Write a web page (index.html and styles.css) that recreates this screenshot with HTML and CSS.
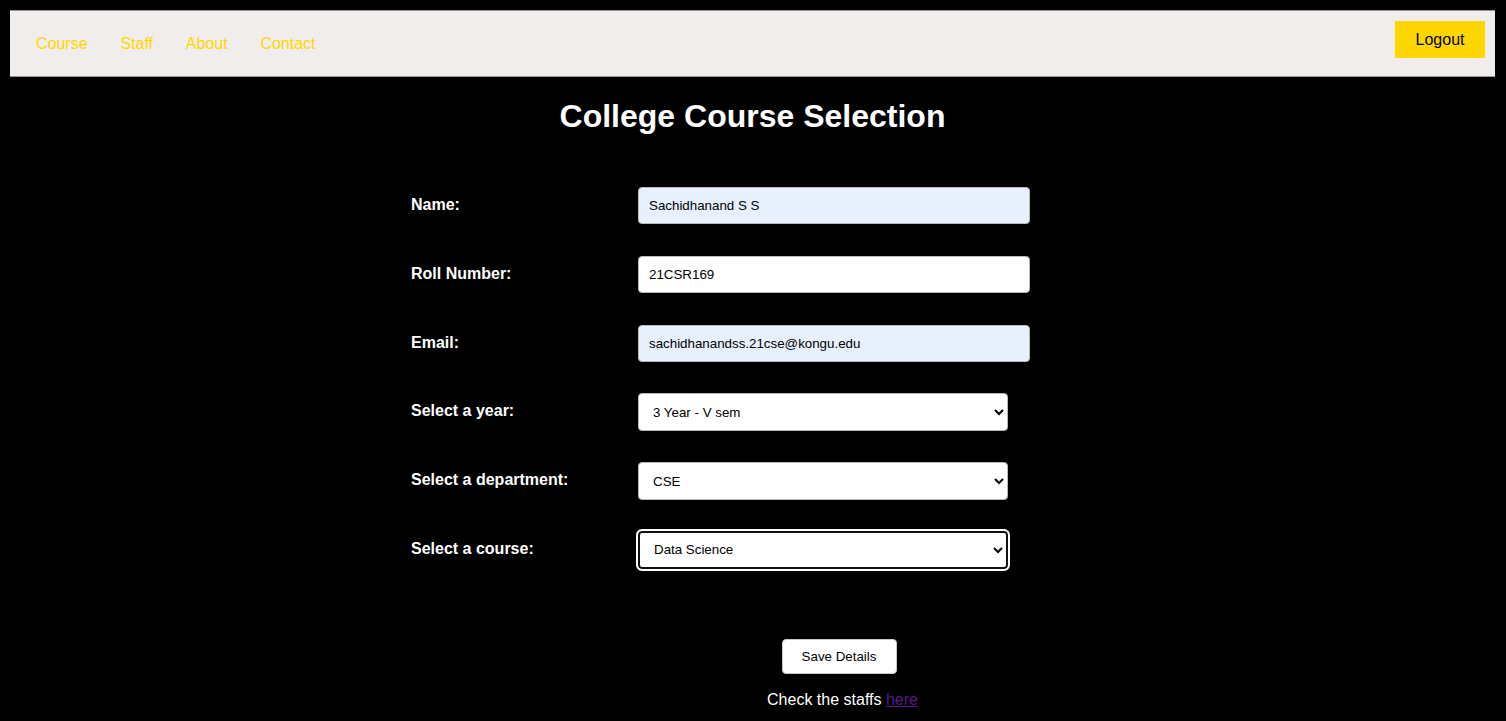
FILE: index.html
```html
<!DOCTYPE html>
<html>
<head>
<meta charset="utf-8">
<title>College Course Selection</title>
<link rel="stylesheet" href="styles.css">
</head>
<body>
<nav class="navbar">
  <ul class="nav-links">
    <li><a href="#">Course</a></li>
    <li><a href="#">Staff</a></li>
    <li><a href="#">About</a></li>
    <li><a href="#">Contact</a></li>
  </ul>
  <button class="logout">Logout</button>
</nav>
<h1 class="title">College Course Selection</h1>
<form class="course-form">
  <label class="label" for="name">Name:</label>
  <input class="field autofill" id="name" type="text" value="Sachidhanand S S">
  <label class="label" for="roll">Roll Number:</label>
  <input class="field" id="roll" type="text" value="21CSR169">
  <label class="label" for="email">Email:</label>
  <input class="field autofill" id="email" type="email" value="sachidhanandss.21cse@kongu.edu">
  <label class="label" for="year">Select a year:</label>
  <select class="select" id="year"><option>3 Year - V sem</option></select>
  <label class="label" for="dept">Select a department:</label>
  <select class="select" id="dept"><option>CSE</option></select>
  <label class="label" for="course">Select a course:</label>
  <select class="select focused" id="course"><option>Data Science</option></select>
</form>
<div class="actions">
  <button class="save">Save Details</button>
</div>
<p class="check">Check the staffs <a class="here" href="#">here</a></p>
</body>
</html>
```
FILE: styles.css
```css
html, body {
  background: #000;
}
body {
  margin: 10px 11px 0 10px;
  font-family: "Liberation Sans", Arial, sans-serif;
  color: #fff;
}
.navbar {
  display: flex;
  align-items: center;
  justify-content: space-between;
  height: 65px;
  background: #f1eded;
  border-top: 1px solid #9a9696;
  border-bottom: 1px solid #9a9696;
  padding: 0 10px 0 10px;
}
.nav-links {
  display: flex;
  list-style: none;
  margin: 0;
  padding: 0;
  padding-top: 1px;
  gap: 0;
}
.nav-links li a {
  display: block;
  padding: 0 16.5px 0 16px;
  margin-right: 0.3px;
  color: #ffd700;
  text-decoration: none;
  font-size: 16px;
  line-height: 20px;
}
.logout {
  margin-top: -8px;
  width: 90px;
  height: 37px;
  background: #ffd700;
  border: none;
  color: #000;
  font-family: "Liberation Sans", Arial, sans-serif;
  font-size: 16px;
  padding: 0;
}
.title {
  margin: 21px 0 0 0;
  text-align: center;
  font-size: 32px;
  line-height: 37px;
  font-weight: bold;
}
.course-form {
  display: grid;
  grid-template-columns: 227px 392px;
  grid-auto-rows: 68.8px;
  margin: 52px 0 0 401px;
}
.label {
  font-weight: bold;
  font-size: 16px;
  align-self: start;
  line-height: 35px;
}
.field {
  box-sizing: border-box;
  height: 37px;
  width: 392px;
  border: 1px solid #b8b8b8;
  border-radius: 4px;
  padding: 0 10px;
  font-family: "Liberation Sans", Arial, sans-serif;
  font-size: 13.33px;
  color: #000;
  background: #fff;
  outline: none;
}
.field.autofill {
  background: #e8f0fe;
}
.select {
  box-sizing: border-box;
  height: 38px;
  width: 370px;
  border: 1px solid #b8b8b8;
  border-radius: 4px;
  padding: 0 10px;
  font-family: "Liberation Sans", Arial, sans-serif;
  font-size: 13.33px;
  color: #000;
  background: #fff;
}
.select.focused {
  outline: 2px solid #fff;
  outline-offset: 0;
  border: 2px solid #101010;
  box-shadow: 0 0 0 1px #fff;
}
.actions {
  margin-top: 39px;
  padding-left: 173px;
  text-align: center;
}
.save {
  box-sizing: border-box;
  width: 115px;
  height: 35px;
  background: #fff;
  border: 1px solid #c8c8c8;
  border-radius: 4px;
  font-family: "Liberation Sans", Arial, sans-serif;
  font-size: 13.33px;
  color: #000;
  padding: 0;
}
.check {
  margin: 17px 0 0 0;
  padding-left: 180px;
  text-align: center;
  font-size: 16px;
  line-height: 18px;
}
.here {
  color: #551a8b;
}
```
